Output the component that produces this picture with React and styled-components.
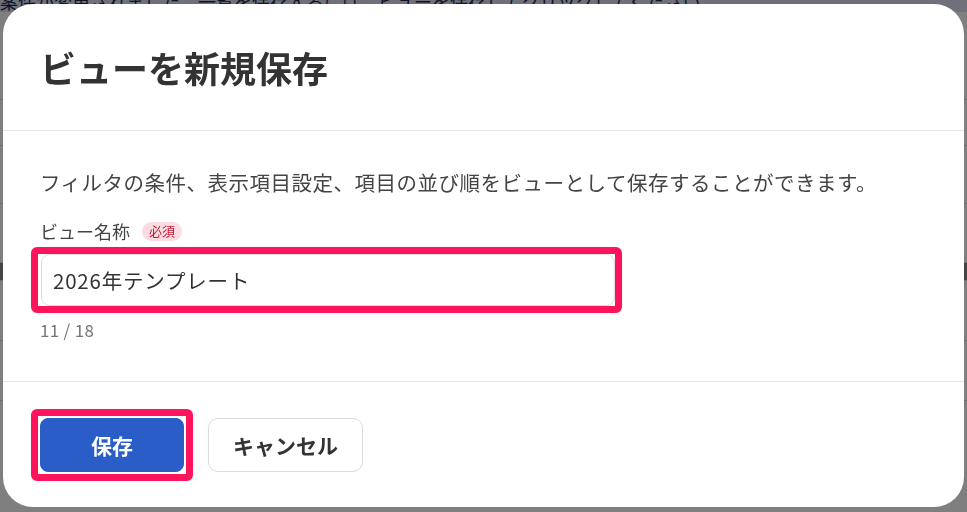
import styled, { createGlobalStyle } from 'styled-components';

const GlobalStyle = createGlobalStyle`
  html, body {
    margin: 0;
    padding: 0;
    background: #ffffff;
    font-family: "Noto Sans CJK JP", "Noto Sans", sans-serif;
    color: #333333;
  }
  * {
    box-sizing: border-box;
  }
`;

const Page = styled.div`
  width: 967px;
  height: 512px;
  overflow: hidden;
`;

const Notice = styled.div`
  height: 12px;
  overflow: hidden;
  background: #dee0f2;
  color: #1c2a55;
  font-size: 18px;
  line-height: 18px;
  white-space: nowrap;
`;

const NoticeText = styled.div`
  margin-top: -8px;
`;

const Row = styled.div`
  height: ${(p) => p.h}px;
  border-bottom: 1px solid #dcdcdc;
  background: ${(p) => (p.dark ? '#8a8a8a' : '#ffffff')};
`;

const Overlay = styled.div`
  position: fixed;
  inset: 0;
  background: rgba(0, 0, 0, 0.5);
`;

const Modal = styled.div`
  position: fixed;
  left: 3px;
  top: 4px;
  width: 961px;
  height: 503px;
  background: #ffffff;
  border-radius: 30px;
  display: flex;
  flex-direction: column;
  overflow: hidden;
`;

const Header = styled.div`
  height: 127px;
  flex-shrink: 0;
  display: flex;
  align-items: center;
  padding-left: 37px;
  border-bottom: 1px solid #e6e6e6;
`;

const Title = styled.h2`
  margin: 0;
  font-size: 36px;
  font-weight: 700;
  color: #333333;
  line-height: 1;
`;

const Body = styled.div`
  padding: 36px 37px 41px;
  border-bottom: 1px solid #e6e6e6;
`;

const Description = styled.p`
  margin: 0;
  font-size: 20.5px;
  letter-spacing: 0.5px;
  line-height: 30px;
  color: #444444;
`;

const Label = styled.div`
  margin-top: 22px;
  display: flex;
  align-items: center;
  gap: 12px;
  font-size: 18px;
  line-height: 24px;
  color: #444444;
`;

const Badge = styled.span`
  display: inline-flex;
  align-items: center;
  height: 19px;
  padding: 0 7px;
  border-radius: 10px;
  background: #fbdce2;
  color: #c41637;
  font-size: 13px;
`;

const Highlight = styled.div`
  display: inline-flex;
  margin-left: -9px;
  border: 7px solid #ff135a;
  border-radius: 6px;
  padding: ${(p) => p.pad || '0 0 0 3px'};
`;

const FieldWrap = styled.div`
  margin-top: 4px;
`;

const Input = styled.input`
  width: 574px;
  height: 52px;
  border: 1px solid #dddddd;
  border-radius: 9px;
  padding: 0 11px;
  font-family: inherit;
  font-size: 20.5px;
  letter-spacing: 0.8px;
  color: #333333;
  outline: none;
  background: #ffffff;
`;

const Counter = styled.div`
  margin-top: 7px;
  font-size: 17px;
  line-height: 20px;
  letter-spacing: 0.3px;
  color: #777777;
`;

const Footer = styled.div`
  flex: 1;
  display: flex;
  align-items: center;
  gap: 15px;
  padding-left: 37px;
`;

const Button = styled.button`
  height: 54px;
  width: ${(p) => p.w}px;
  border-radius: ${(p) => (p.primary ? 8 : 10)}px;
  border: 1px solid ${(p) => (p.primary ? '#2a5dc8' : '#dcdcdc')};
  background: ${(p) => (p.primary ? '#2a5dc8' : '#ffffff')};
  color: ${(p) => (p.primary ? '#ffffff' : '#333333')};
  font-family: inherit;
  font-size: 21px;
  font-weight: 700;
  cursor: pointer;
`;

const App = () => {
  return (
    <>
      <GlobalStyle />
      <Page>
        <Notice>
          <NoticeText>
            案件が変更されました。一覧を保存するには、ビューを保存してクリックしてください。
          </NoticeText>
        </Notice>
        <Row h={88} />
        <Row h={46} />
        <Row h={58} />
        <Row h={59} />
        <Row h={18} dark />
        <Row h={60} />
        <Row h={60} />
      </Page>
      <Overlay />
      <Modal>
        <Header>
          <Title>ビューを新規保存</Title>
        </Header>
        <Body>
          <Description>
            フィルタの条件、表示項目設定、項目の並び順をビューとして保存することができます。
          </Description>
          <Label>
            ビュー名称
            <Badge>必須</Badge>
          </Label>
          <FieldWrap>
            <Highlight>
              <Input defaultValue="2026年テンプレート" />
            </Highlight>
          </FieldWrap>
          <Counter>11 / 18</Counter>
        </Body>
        <Footer>
          <Highlight pad="2px">
            <Button primary w={144}>保存</Button>
          </Highlight>
          <Button w={155}>キャンセル</Button>
        </Footer>
      </Modal>
    </>
  );
};

export default App;
